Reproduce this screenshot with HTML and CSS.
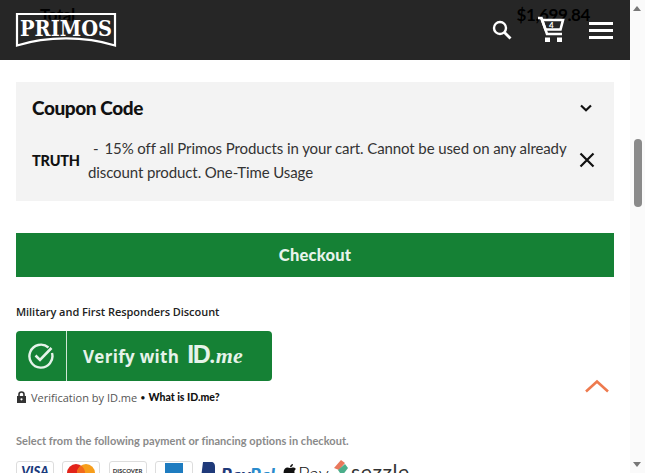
FILE: index.html
```html
<!DOCTYPE html>
<html lang="en">
<head>
<meta charset="utf-8">
<title>Cart - Primos</title>
<link rel="stylesheet" href="styles.css">
</head>
<body>
<div class="window">
  <div class="page">
    <div class="total-row"><span class="total-label">Total</span><span class="total-value">$1,699.84</span></div>
    <section class="coupon">
      <div class="coupon-head">
        <h2 class="coupon-title">Coupon Code</h2>
        <svg class="chevron" width="14" height="10" viewBox="0 0 14 10"><path d="M2 2.5 L7 7.2 L12 2.5" fill="none" stroke="#111" stroke-width="2.2"/></svg>
      </div>
      <div class="coupon-row">
        <strong class="coupon-code">TRUTH</strong>
        <p class="coupon-text"><span class="dash">-</span>15% off all Primos Products in your cart. Cannot be used on any already discount product. One-Time Usage</p>
        <svg class="close" width="16" height="16" viewBox="0 0 16 16"><path d="M1.5 1.5 L14.5 14.5 M14.5 1.5 L1.5 14.5" stroke="#111" stroke-width="2.2"/></svg>
      </div>
    </section>
    <button class="checkout">Checkout</button>
    <div class="military">Military and First Responders Discount</div>
    <div class="idme">
      <div class="idme-icon">
        <svg width="28" height="28" viewBox="0 0 28 28"><path d="M21.5 5.5 A11.5 11.5 0 1 0 25 11" fill="none" stroke="#e6f3ea" stroke-width="2.4"/><path d="M8.5 13.5 L13 18 L24.5 6" fill="none" stroke="#e6f3ea" stroke-width="2.6"/></svg>
      </div>
      <div class="idme-label"><span class="idme-verify">Verify with</span><span class="idme-id">ID</span><span class="idme-me">.me</span></div>
    </div>
    <div class="verification">
      <svg width="11" height="12" viewBox="0 0 11 12"><path d="M1 5h9v7H1z" fill="#333"/><path d="M3 5V3.5a2.5 2.5 0 0 1 5 0V5" fill="none" stroke="#333" stroke-width="1.6"/><circle cx="5.5" cy="8.3" r="1.1" fill="#fff"/></svg>
      <span class="ver-text">Verification by ID.me</span><span class="ver-dot">•</span><strong class="ver-link">What is ID.me?</strong>
    </div>
    <p class="select">Select from the following payment or financing options in checkout.</p>
    <div class="payments">
      <div class="card card-visa"><span>VISA</span></div>
      <div class="card card-mc"><svg width="28" height="18" viewBox="0 0 28 18"><circle cx="9" cy="10" r="9" fill="#e2231a"/><circle cx="19" cy="10" r="9" fill="#f79e1b"/><path d="M14 2.5a9 9 0 0 1 0 15a9 9 0 0 1 0-15z" fill="#f26a1d"/></svg></div>
      <div class="card card-disc"><span>DISCOVER</span></div>
      <div class="card card-amex"><div class="amex-box"></div></div>
      <div class="paypal">
        <svg class="pp-mark" width="14" height="16" viewBox="0 0 14 16"><path d="M2 0 H10 C13 0 14 2 14 5 V16 H0z" fill="#1f3a7a"/></svg>
        <span class="pp-dark">Pay</span><span class="pp-light">Pal</span>
      </div>
      <div class="apple"><svg width="14" height="16" viewBox="0 0 14 16"><path d="M10 1 C10 3 8.5 4.3 7 4.2 C7 2.6 8.4 1.2 10 1z M7 5 C8 5 9 4.4 10.2 4.4 C11.4 4.4 12.4 5 13 6 C10.6 7.4 11 10.6 13.4 11.6 C12.6 13.6 11.4 15.4 10 15.4 C9 15.4 8.4 14.8 7.2 14.8 C6 14.8 5.4 15.4 4.4 15.4 C2.6 15.4 .6 12 .6 9.2 C.6 6.2 2.6 4.5 4.4 4.5 C5.4 4.5 6.3 5 7 5z" fill="#111"/></svg><span>Pay</span></div>
      <div class="sezzle"><svg width="16" height="18" viewBox="0 0 16 18"><path d="M1 9 L8 1 L12 4 L6 11z" fill="#e9785c"/><path d="M5 11 L12 5 L15 9 L9 17z" fill="#4cae8b"/></svg><span>sezzle</span></div>
    </div>
  </div>
  <aside class="scrollbar">
    <span class="arrow arrow-up"></span>
    <span class="thumb"></span>
    <span class="arrow arrow-down"></span>
  </aside>
  <header class="header">
    <svg class="logo" width="102" height="36" viewBox="0 0 102 36">
      <path d="M2 2 H100 V33.5 C70 24 32 24 2 33.5z" fill="none" stroke="#fff" stroke-width="2.2"/>
      <text x="51" y="23.5" text-anchor="middle" textLength="92" lengthAdjust="spacingAndGlyphs" class="logo-text">PRIMOS</text>
    </svg>
    <div class="header-icons">
      <svg width="20" height="20" viewBox="0 0 20 20"><circle cx="8" cy="8" r="6" fill="none" stroke="#fff" stroke-width="2.4"/><path d="M12.5 12.5 L18.5 18.5" stroke="#fff" stroke-width="2.8"/></svg>
      <div class="cart">
        <svg width="28" height="28" viewBox="0 0 28 28"><path d="M1 2 H4.5 L10 18 H25" fill="none" stroke="#fff" stroke-width="2.6"/><path d="M5 4 H26 L23.5 13.5 H8.5z" fill="none" stroke="#fff" stroke-width="2.6"/><rect x="8" y="21.5" width="5" height="4.5" fill="#fff"/><rect x="20" y="21.5" width="5" height="4.5" fill="#fff"/></svg>
        <span class="cart-count">4</span>
      </div>
      <div class="burger"><span></span><span></span><span></span></div>
    </div>
  </header>
  <svg class="to-top" width="26" height="14" viewBox="0 0 26 14"><path d="M2 12.5 L13 2.5 L24 12.5" fill="none" stroke="#ee7a4e" stroke-width="2.6"/></svg>
</div>
</body>
</html>
```
FILE: styles.css
```css
* { box-sizing: border-box; }
html, body { margin: 0; padding: 0; height: 473px; overflow: hidden; background: #fff; }
body { font-family: "Lato", "Liberation Sans", sans-serif; color: #111; }
.window { position: relative; display: flex; width: 645px; height: 473px; overflow: hidden; }
.page { width: 630px; flex: none; padding: 0 16px; }
.total-row { display: flex; justify-content: space-between; height: 82px; padding: 5px 24px 0 24px; font-weight: 700; font-size: 17px; line-height: 20px; letter-spacing: -.4px; color: #000; }
.coupon { width: 598px; height: 119px; background: #f3f3f3; padding: 14px 20px 0 16px; }
.coupon-head { display: flex; justify-content: space-between; align-items: center; height: 24px; padding-right: 1px; }
.coupon-title { margin: 0; font-size: 19px; font-weight: 900; line-height: 24px; letter-spacing: -.4px; }
.coupon-row { display: flex; align-items: center; margin-top: 16px; }
.coupon-code { font-size: 14.5px; font-weight: 900; letter-spacing: -.2px; width: 56px; flex: none; }
.coupon-text { margin: 0; width: 482px; flex: none; font-size: 15px; line-height: 24px; letter-spacing: -.1px; color: #333; }
.dash { display: inline-block; margin: 0 6px 0 5px; }
.close { margin-left: 9px; flex: none; }
.checkout { display: block; width: 598px; height: 44px; margin-top: 32px; border: 0; background: #158135; color: #e8f4ec; font: 900 16.5px "Lato", sans-serif; letter-spacing: .2px; }
.military { margin-top: 28px; font: 600 11px/14px "Open Sans", sans-serif; letter-spacing: -.05px; color: #222; }
.idme { display: flex; width: 256px; height: 50px; margin-top: 12px; background: #158135; border-radius: 4px; }
.idme-icon { width: 51px; display: flex; align-items: center; justify-content: center; border-right: 1px solid #cfe6d6; }
.idme-label { display: flex; align-items: baseline; padding: 9px 0 0 16px; color: #e6f3ea; }
.idme-verify { font: 700 17px "Open Sans", sans-serif; letter-spacing: .3px; margin-right: 8px; }
.idme-id { font: 700 25px "Liberation Sans", sans-serif; letter-spacing: -1.5px; }
.idme-me { font: italic 700 22px "Liberation Serif", serif; margin-left: 1px; }
.verification { display: flex; align-items: center; height: 14px; margin-top: 9px; font-size: 11px; }
.ver-text { margin-left: 4px; font-family: "Open Sans", sans-serif; color: #555; }
.ver-dot { margin: 0 3px; font-size: 9px; }
.ver-link { font: 900 10.5px "Lato", sans-serif; }
.select { margin: 30px 0 0; font: 700 11px/14px "Lato", sans-serif; color: #8a8a8a; letter-spacing: .04px; }
.payments { display: flex; align-items: flex-start; margin-top: 13px; height: 30px; }
.card { width: 38px; height: 24px; margin-right: 8.25px; border: 1px solid #ddd; border-radius: 3px; display: flex; justify-content: center; overflow: hidden; }
.card-visa span { font: italic 900 13px "Lato", sans-serif; color: #1a3a7c; margin-top: 1px; }
.card-mc svg { margin-top: 1px; }
.card-disc span { font: 700 6px "Lato", sans-serif; margin-top: 5px; color: #333; }
.amex-box { width: 18px; height: 20px; margin-top: 1px; background: #1e7cc0; }
.paypal { display: flex; align-items: flex-start; width: 82px; margin-top: 1px; font: italic 900 18px/18px "Lato", sans-serif; }
.pp-mark { margin-right: 6px; flex: none; }
.pp-dark { color: #1f3a7a; padding-top: 4px; width: 29px; letter-spacing: .5px; }
.pp-light { color: #2a8bcc; padding-top: 4px; letter-spacing: .5px; }
.apple { display: flex; align-items: flex-start; margin-top: 2px; width: 50px; font: 300 20px/20px "Lato", sans-serif; }
.apple svg { margin-right: 1px; }
.sezzle { display: flex; align-items: flex-start; margin-top: -2px; font: 400 21px/18px "Lato", sans-serif; letter-spacing: .6px; color: #333; }
.sezzle span { margin: 4px 0 0 2px; }
.scrollbar { width: 15px; flex: none; background: #fafafa; position: relative; }
.thumb { position: absolute; top: 139px; left: 4px; width: 8px; height: 68px; border-radius: 4px; background: #8a8a8a; }
.arrow { position: absolute; left: 3px; width: 0; height: 0; border-left: 4px solid transparent; border-right: 4px solid transparent; }
.arrow-up { top: 6px; border-bottom: 5px solid #777; }
.arrow-down { bottom: 6px; border-top: 5px solid #777; }
.header { position: absolute; top: 0; left: 0; width: 630px; height: 60px; background: rgba(0, 0, 0, .85); display: flex; justify-content: space-between; align-items: center; padding: 0 17px 0 15px; }
.logo { flex: none; }
.logo-text { font: 700 23px "DejaVu Serif", serif; fill: #fff; stroke: #262626; stroke-width: 2px; paint-order: stroke; }
.header-icons { display: flex; align-items: center; }
.cart { position: relative; width: 28px; height: 28px; margin: 0 24px 0 25px; }
.cart-count { position: absolute; top: 4px; left: 12px; font: 700 8px/10px "Lato", sans-serif; color: #fff; }
.burger { display: flex; flex-direction: column; gap: 4px; width: 24px; }
.burger span { height: 3px; background: #fff; }
.to-top { position: absolute; left: 584px; top: 379px; }
```
